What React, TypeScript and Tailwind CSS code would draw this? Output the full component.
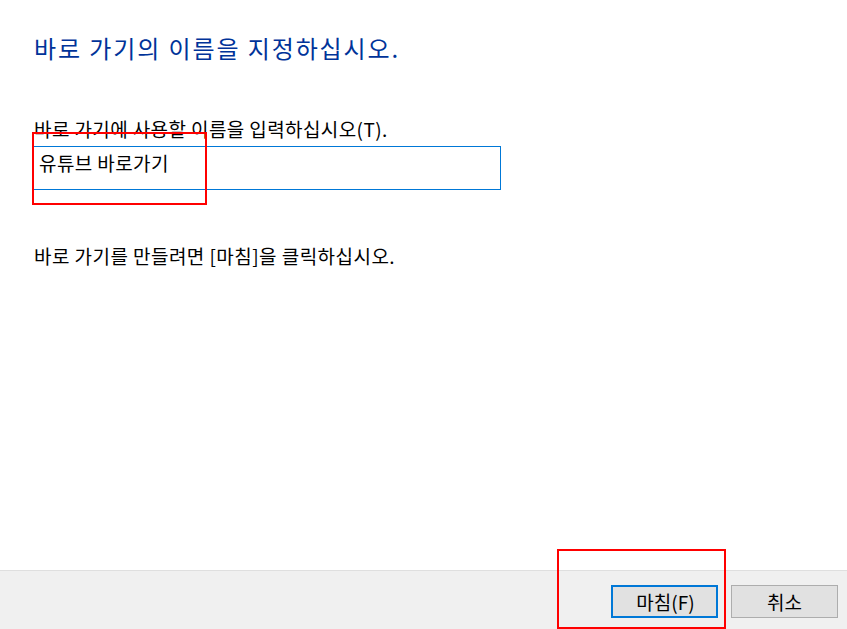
import React from "react";

const FONT = { fontFamily: '"Noto Sans CJK KR", "Noto Sans", sans-serif' };

export default function App() {
  return (
    <div
      className="relative flex h-[629px] w-[847px] flex-col overflow-hidden bg-white text-black"
      style={FONT}
    >
      <main className="flex-1 pl-[34px] pt-[32px]">
        <h1 className="text-[24px] leading-[32px] tracking-[1.9px] text-[#003399]">바로 가기의 이름을 지정하십시오.</h1>

        <label className="mt-[53px] block text-[19px] leading-[24px] tracking-[0.4px]">
          바로 가기에 사용할 이름을 입력하십시오(T).
        </label>
        <div className="ml-[-1px] mt-[5px] h-[44px] w-[468px] border border-[#0078d7] px-[5px] pt-[4px] text-[19px] leading-[24px] tracking-[0.4px]">
          유튜브 바로가기
        </div>

        <p className="mt-[54px] text-[19px] leading-[24px] tracking-[0.45px]">바로 가기를 만들려면 [마침]을 클릭하십시오.</p>
      </main>

      <footer className="flex h-[59px] items-start justify-end gap-[13px] border-t border-[#dfdfdf] bg-[#f0f0f0] pr-[9px] pt-[14px]">
        <button className="h-[33px] w-[107px] border-2 border-[#0078d7] bg-[#e1e1e1] pl-[2px] text-[19px] leading-none">마침(F)</button>
        <button className="h-[33px] w-[107px] border border-[#adadad] bg-[#e1e1e1] text-[19px] leading-none">취소</button>
      </footer>

      <div className="absolute left-[32px] top-[132px] h-[73px] w-[175px] border-2 border-[#ff0000]" />
      <div className="absolute left-[557px] top-[549px] h-[80px] w-[169px] border-2 border-[#ff0000]" />
    </div>
  );
}
